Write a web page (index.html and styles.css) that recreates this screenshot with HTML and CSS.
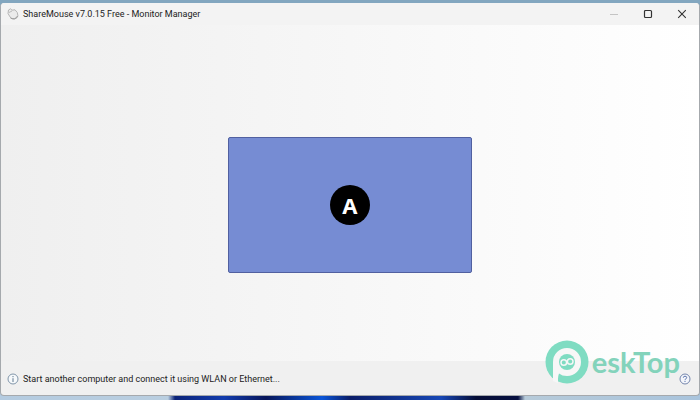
FILE: index.html
```html
<!DOCTYPE html>
<html lang="en">
<head>
    <meta charset="UTF-8">
    <meta name="viewport" content="width=device-width, initial-scale=1.0">
    <title>ShareMouse v7.0.15 Free - Monitor Manager</title>
    <link rel="stylesheet" href="styles.css">
</head>
<body>
    <div class="window">
        <header class="titlebar">
            <svg class="app-icon" viewBox="0 0 12 12" aria-hidden="true">
                <path d="M1.500 2 L3.500 .8 L5 2.200 L8 1.800 Q11 4 11 8 Q10 11 7 11 Q3.500 11 2.500 8 L1 5.500 Z" fill="#ebebeb" stroke="#b5b5b5"/>
                <path d="M2 4.500 L5 3" fill="none" stroke="#bbb"/>
                <path d="M3.500 10 Q8 12.500 10.500 8" fill="none" stroke="#999"/>
            </svg>
            <h1 class="title">ShareMouse v7.0.15 Free - Monitor Manager</h1>
            <div class="controls">
                <button class="control" aria-label="Minimize" disabled>
                    <svg viewBox="0 0 10 10"><path d="M1 5.500 H9" stroke="#c4c4c4"/></svg>
                </button>
                <button class="control" aria-label="Maximize">
                    <svg viewBox="0 0 10 10"><rect x="1.500" y="1.500" width="7" height="7" rx="1" fill="none" stroke="#333" stroke-width="1.200"/></svg>
                </button>
                <button class="control" aria-label="Close">
                    <svg viewBox="0 0 10 10"><path d="M1.200 1.200 L8.800 8.800 M8.800 1.200 L1.200 8.800" stroke="#333" stroke-width="1.100"/></svg>
                </button>
            </div>
        </header>

        <main class="desk">
            <button class="monitor"><span class="monitor-name">A</span></button>
        </main>

        <footer class="statusbar">
            <svg class="info-icon" viewBox="0 0 12 12" aria-hidden="true">
                <circle cx="6" cy="6" r="5" fill="#f6f9fb" stroke="#8095a9"/>
                <path d="M6 5.200 V9 M6 3 V4.200" stroke="#60788f"/>
            </svg>
            <p class="status">Start another computer and connect it using WLAN or Ethernet...</p>
            <button class="help" aria-label="Help">
                <svg viewBox="0 0 12 12">
                    <circle cx="6" cy="6" r="5" fill="#f4f6fb" stroke="#7485ab"/>
                    <path d="M4.300 4.700 Q4.400 3.200 6 3.200 Q7.700 3.200 7.700 4.600 Q7.700 5.500 6.600 6 Q6 6.300 6 7.200 M6 8 V9" fill="none" stroke="#5b73ac"/>
                </svg>
            </button>
        </footer>
    </div>

    <div class="watermark">
        <svg class="watermark-logo" viewBox="0 0 44 44" aria-hidden="true">
            <circle cx="22" cy="22" r="21.500"/>
            <path class="logo-gap" d="M8 41 V22 A14 14 0 1 1 22 36 Q17 36 14 33.500 Q13 36 13 39 V43 L8 41 Z"/>
            <circle cx="22" cy="22" r="8"/>
            <g class="logo-rings">
                <circle cx="18.800" cy="22.500" r="2.800"/>
                <circle cx="25.200" cy="21.500" r="2.800"/>
            </g>
        </svg>
        <span class="watermark-text">eskTop</span>
    </div>
</body>
</html>
```

FILE: styles.css
```css
* {
    box-sizing: border-box;
}

body {
    margin: 0;
    min-height: 100vh;
    padding: 3px 0 4px;
    display: flex;
    position: relative;
    font-family: Roboto, "Noto Sans", sans-serif;
    color: #222;
    background:
        linear-gradient(90deg, #b4cbe0 0%, #b9cee0 24%, #0b2378 25%, #123cae 32%, #07165a 38%, #0a55d8 46%, #0a1d68 50%, #1747b5 63%, #050d36 68%, #061040 74%, #b6cad9 75%, #a9c4dd 100%) bottom / 100% 20px no-repeat,
        #82a6bf;
}

.window {
    flex: 1;
    display: flex;
    flex-direction: column;
    background: #f0f0f0;
    border: 1px solid #a5a9ad;
    border-top: none;
    border-radius: 4px;
    overflow: hidden;
}

.titlebar {
    display: flex;
    align-items: center;
    height: 22px;
    padding-left: 6px;
    background: #f3f3f3;
}

.app-icon {
    width: 12px;
    height: 12px;
    margin-right: 4px;
}

.title {
    flex: 1;
    margin: 0;
    font-size: 9px;
    line-height: 12px;
    font-weight: 400;
}

.controls {
    display: flex;
}

.control {
    display: flex;
    align-items: center;
    justify-content: center;
    width: 34px;
    height: 22px;
    padding: 0;
    border: none;
    background: none;
}

.control svg {
    width: 10px;
    height: 10px;
}

.desk {
    flex: 1;
    display: flex;
    align-items: center;
    justify-content: center;
    padding-top: 24px;
    background: linear-gradient(90deg, #efefef, #ffffff);
}

.monitor {
    display: flex;
    align-items: center;
    justify-content: center;
    width: 35%;
    aspect-ratio: 244 / 136;
    padding: 0;
    border: 1px solid #5160a0;
    border-radius: 2px;
    background: #768cd3;
}

.monitor-name {
    width: 40px;
    height: 40px;
    border-radius: 50%;
    background: #000;
    color: #fff;
    font-family: "Noto Sans", sans-serif;
    font-size: 22px;
    line-height: 40px;
    font-weight: 700;
}

.statusbar {
    display: flex;
    align-items: center;
    height: 34px;
    padding: 2px 8px 0 6px;
}

.info-icon {
    width: 12px;
    height: 12px;
    margin-right: 4px;
}

.status {
    flex: 1;
    margin: 0;
    font-size: 9px;
    line-height: 12px;
}

.help {
    width: 12px;
    height: 12px;
    padding: 0;
    border: none;
    background: none;
}

.help svg {
    display: block;
}

.watermark {
    position: absolute;
    right: 20px;
    bottom: 16px;
    display: flex;
    align-items: center;
    gap: 3px;
    color: #83d3bb;
    pointer-events: none;
}

.watermark-logo {
    width: 44px;
    height: 44px;
    fill: #7fdcc2;
}

.logo-gap {
    fill: #f7f7f7;
}

.logo-rings {
    fill: none;
    stroke: #f7f7f7;
    stroke-width: 1.5px;
}

.watermark-text {
    font-family: Lato, sans-serif;
    font-size: 29px;
    line-height: 44px;
    font-weight: 700;
}
```
